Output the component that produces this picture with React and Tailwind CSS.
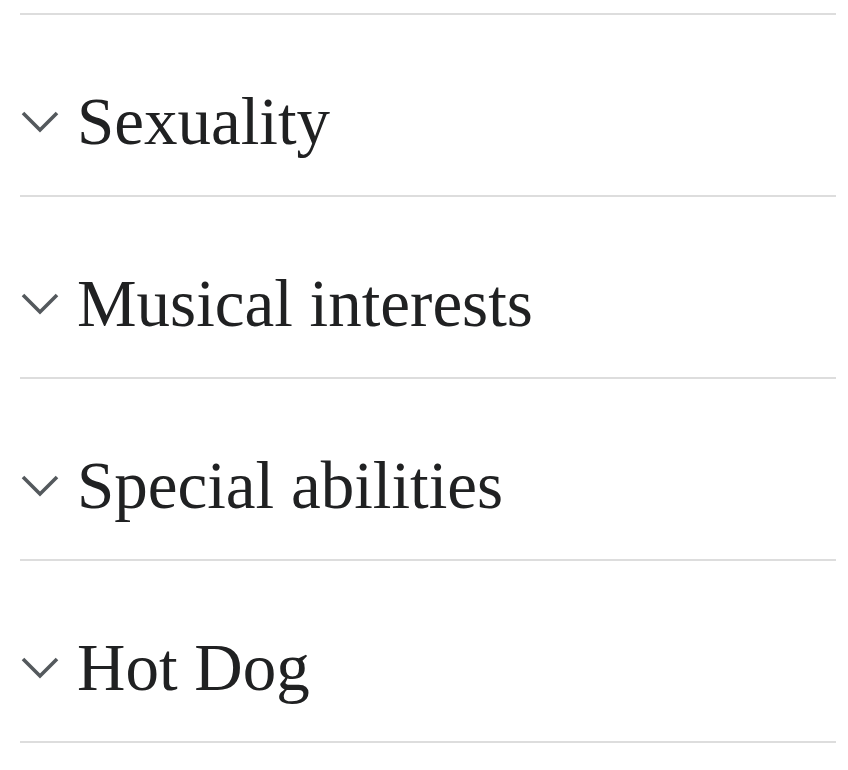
import React from "react";

const items = ["Sexuality", "Musical interests", "Special abilities", "Hot Dog"];

function Chevron() {
  return (
    <svg width="40" height="26" viewBox="0 0 40 26" className="shrink-0">
      <polyline points="3,5 20,22 37,5" fill="none" stroke="#54595d" strokeWidth="3.6" />
    </svg>
  );
}

export default function App() {
  return (
    <div className="bg-white w-[848px] h-[770px] pl-5 pr-3 pt-[13px]" style={{ fontFamily: '"Liberation Serif", serif' }}>
      <div className="border-t-2 border-[#dddddd]">
        {items.map((t) => (
          <div key={t} className="border-b-2 border-[#dddddd] h-[182px] flex items-center pt-[32px]">
            <Chevron />
            <span className="ml-[17px] text-[67px] leading-none text-[#202122]">{t}</span>
          </div>
        ))}
      </div>
    </div>
  );
}
